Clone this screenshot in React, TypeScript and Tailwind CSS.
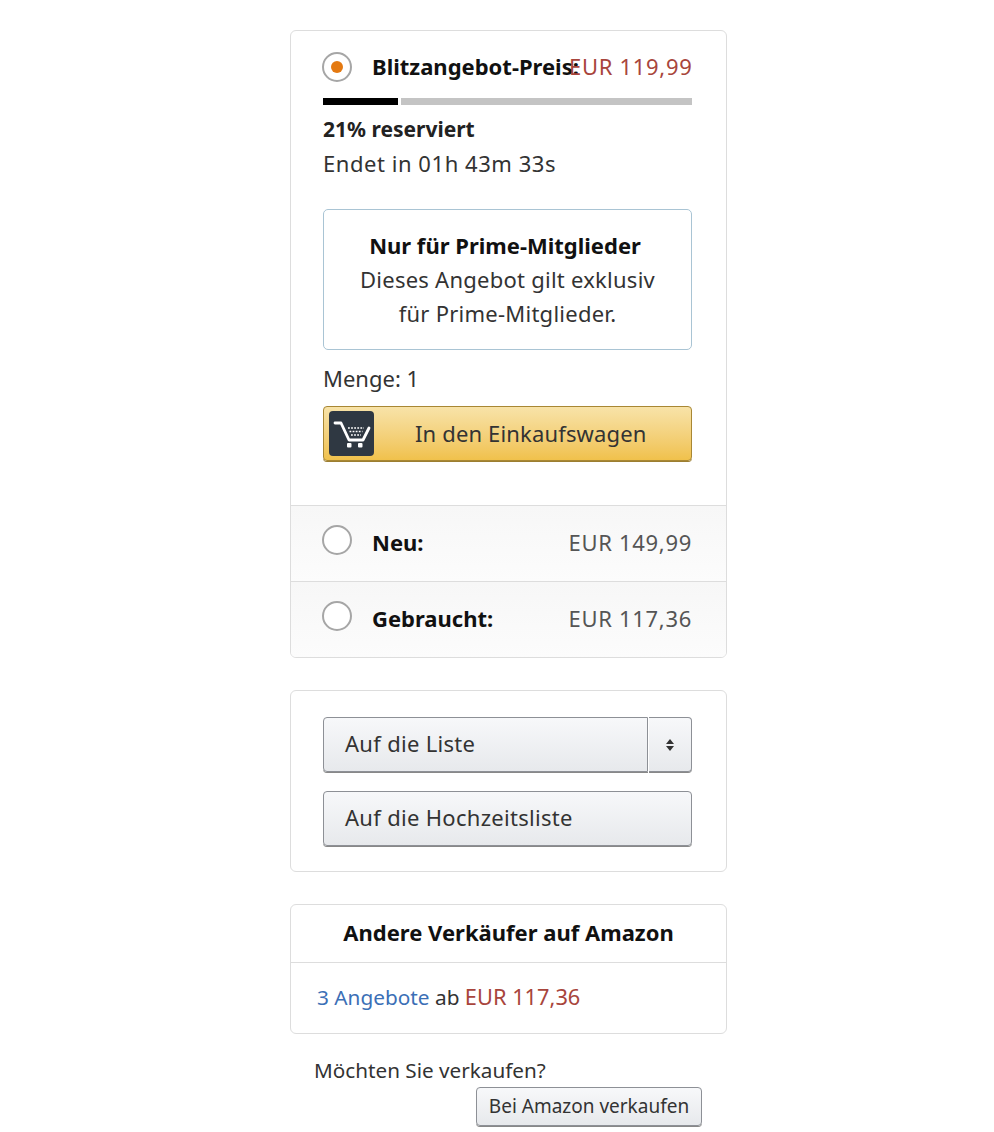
const FONT = "font-['Noto_Sans','Open_Sans',sans-serif]";

function Radio({ on = false }: { on?: boolean }) {
  return (
    <span className="flex h-[30px] w-[30px] shrink-0 items-center justify-center rounded-full border-2 border-[#a6a6a6] bg-white">
      {on && <span className="h-3 w-3 rounded-full bg-[#e47911]" />}
    </span>
  );
}

function CartIcon() {
  return (
    <svg viewBox="0 0 44 44" className="h-[44px] w-[44px]">
      <path d="M5 11h6l8 17h14l6-12" fill="none" stroke="#fff" strokeWidth="2.8" strokeLinejoin="round" strokeLinecap="round" />
      <path d="M18 16h16M19.5 19.5h13M21 23h10" stroke="#fff" strokeWidth="1.7" strokeDasharray="1.8 1.3" fill="none" />
      <rect x="17" y="31" width="4.5" height="4.5" rx="1" fill="#fff" />
      <rect x="28" y="31" width="4.5" height="4.5" rx="1" fill="#fff" />
    </svg>
  );
}

function OptionRow({ label, price }: { label: string; price: string }) {
  return (
    <div className="flex h-[76px] border-t border-[#ddd] bg-gradient-to-b from-[#f7f7f7] to-[#fcfcfc] pl-[31px] pr-[34px]">
      <div className="mt-[19px]"><Radio /></div>
      <span className="ml-[20px] mt-[19px] text-[22px] font-bold leading-[34px] text-[#111]">{label}</span>
      <span className="ml-auto mt-[19px] text-[22px] leading-[34px] tracking-[0.7px] text-[#555]">{price}</span>
    </div>
  );
}

export default function App() {
  const grey = "rounded-[4px] border border-[#8d9096] bg-gradient-to-b from-[#f7f8fa] to-[#e7e9ec] shadow-[0_1px_0_#888]";
  return (
    <div className={`${FONT} min-h-[1132px] bg-white pt-[30px] pl-[290px] text-[#333]`}>
      <div className="w-[437px]">
        <section className="overflow-hidden rounded-[6px] border border-[#ddd] bg-white">
          <div className="h-[474px] pl-[31px] pr-[34px] pt-[21px]">
            <div className="flex h-[30px] items-center">
              <Radio on />
              <span className="ml-[20px] w-[197px] whitespace-nowrap pb-[2px] text-[22px] font-bold leading-[34px] text-[#111]">Blitzangebot-Preis:</span>
              <span className="ml-auto whitespace-nowrap pb-[2px] text-[22px] leading-[34px] tracking-[0.7px] text-[#a8453c]">EUR 119,99</span>
            </div>
            <div className="ml-px mt-[16px] flex h-[7px] gap-[3px]">
              <div className="w-[75px] bg-black" />
              <div className="flex-1 bg-[#c4c4c4]" />
            </div>
            <div className="ml-px mt-[7px] text-[21px] font-bold leading-[34px] text-[#222]">21% reserviert</div>
            <div className="ml-px text-[22px] leading-[34px] tracking-[0.55px]">Endet in 01h 43m 33s</div>
            <div className="ml-px mt-[29px] h-[141px] rounded-[5px] border border-[#a9c4d4] pt-[18px] text-center text-[22px] leading-[34px]">
              <div className="pr-[5px] font-bold text-[#111]">Nur für Prime-Mitglieder</div>
              <div className="tracking-[0.25px]">Dieses Angebot gilt exklusiv</div>
              <div className="tracking-[0.25px]">für Prime-Mitglieder.</div>
            </div>
            <div className="ml-px mt-[11px] text-[22px] leading-[34px]">Menge: 1</div>
            <div className="relative ml-px mt-[11px] flex h-[55px] items-center rounded-[4px] border border-[#a88734] bg-gradient-to-b from-[#f8e3a8] to-[#f0c14b] shadow-[0_1px_0_#9c7e31]">
              <span className="ml-[5px] flex h-[45px] w-[45px] items-center justify-center rounded-[4px] bg-[#2f3842]"><CartIcon /></span>
              <span className="ml-[41px] whitespace-nowrap pb-[2px] text-[22px] leading-[34px] tracking-[0.15px] text-[#333]">In den Einkaufswagen</span>
            </div>
          </div>
          <OptionRow label="Neu:" price="EUR 149,99" />
          <OptionRow label="Gebraucht:" price="EUR 117,36" />
        </section>

        <section className="mt-[32px] h-[182px] rounded-[6px] border border-[#ddd] bg-white pl-[32px] pr-[34px] pt-[26px]">
          <div className="flex h-[55px]">
            <div className={`${grey} flex flex-1 items-center rounded-r-none pb-[2px] pl-[21px] text-[22px] tracking-[0.3px]`}>Auf die Liste</div>
            <div className={`${grey} ml-px flex w-[43px] items-center justify-center rounded-l-none border-l-0`}>
              <svg viewBox="0 0 10 14" className="h-[14px] w-[10px]"><path d="M5 1l4 5H1zM5 13l4-5H1z" fill="#333" /></svg>
            </div>
          </div>
          <div className={`${grey} mt-[19px] flex h-[55px] items-center pb-[2px] pl-[21px] text-[22px] tracking-[0.3px]`}>Auf die Hochzeitsliste</div>
        </section>

        <section className="mt-[32px] h-[130px] rounded-[6px] border border-[#ddd] bg-white">
          <div className="flex h-[58px] items-center justify-center border-b border-[#ddd] pb-[2px] text-[22px] font-bold text-[#111]">Andere Verkäufer auf Amazon</div>
          <div className="pl-[26px] pt-[17px] text-[20.8px] leading-[34px]">
            <span className="text-[#3b6fb6]">3 Angebote</span> ab <span className="text-[21.8px] text-[#a8453c]">EUR 117,36</span>
          </div>
        </section>

        <div className="ml-[24px] mt-[20px] text-[20.7px] leading-[33px]">Möchten Sie verkaufen?</div>
        <div className="flex">
          <div className={`${grey} ml-[186px] flex h-[39px] w-[226px] items-center justify-center text-[19px]`}>Bei Amazon verkaufen</div>
        </div>
      </div>
    </div>
  );
}
